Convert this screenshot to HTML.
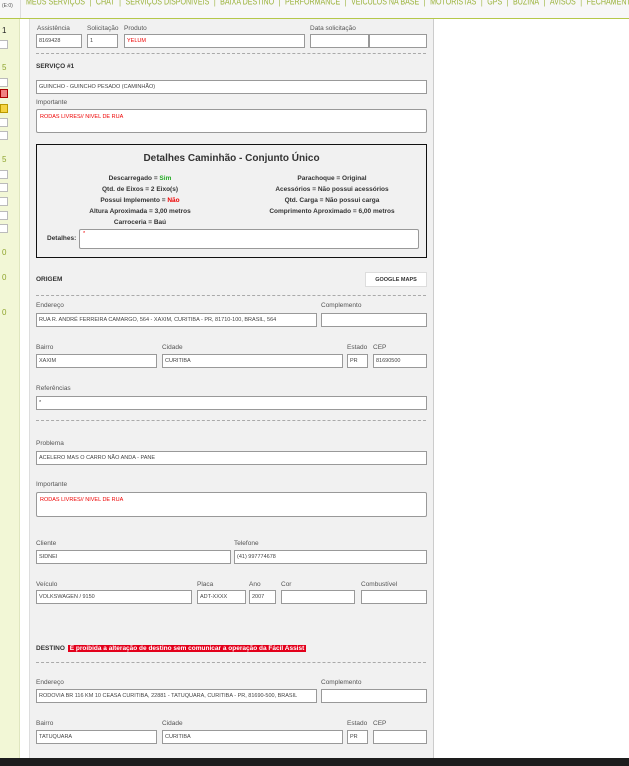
<!DOCTYPE html>
<html><head><meta charset="utf-8"><style>
*{margin:0;padding:0;box-sizing:border-box}
body{width:629px;height:766px;overflow:hidden;background:#fff;font-family:"Liberation Sans",sans-serif;position:relative}
.a{position:absolute}
.nav{left:0;top:0;width:629px;height:19px;background:#f7f7f7;border-bottom:1px solid #b5c84a;color:#9ab23a;white-space:nowrap;overflow:hidden}
.nav b{font-weight:normal;margin:0 4.5px}
.side{left:0;top:19px;width:20px;height:739px;background:#f2f7d6;border-right:1px solid #dfe6bf}
.panel{left:29px;top:19px;width:405px;height:739px;background:#f1f1f1;border-left:1px solid #ddd;border-right:1px solid #ccc}
.l{font-size:6.5px;color:#555}
.i{background:#fff;border:1px solid #999;font-size:5.5px;color:#444;padding:3px 2px 0;height:14px;white-space:nowrap;overflow:hidden}
.t{background:#fff;border:1px solid #999;border-radius:2px;font-size:5.5px;color:#e00;padding:4px 3px}
.d{border-top:1px dashed #aaa;height:0;left:36px;width:390px}
.h{font-size:6.5px;font-weight:bold;color:#333}
.box{left:36px;top:144px;width:391px;height:114px;border:1.5px solid #111}
.r{font-size:6.5px;font-weight:bold;color:#333;text-align:center;width:180px}
.bar{left:0;top:758px;width:629px;height:8px;background:#1d1d1d}
.sb{font-size:8px;color:#8fa52e;left:2px}
.sq{left:0;width:8px;height:9px;background:#fff;border:1px solid #bbb;border-left:0}
</style></head><body>
<div class="a nav"><span style="position:absolute;left:2px;top:3px;font-size:5px;color:#555">(E:0)</span><div class="a" style="left:20px;top:0;width:1px;height:18px;background:#ddd"></div><span style="position:absolute;left:26px;top:-3px;font-size:7.1px;line-height:9px;transform:scaleY(1.25);transform-origin:top left">MEUS SERVIÇOS<b>|</b>CHAT<b>|</b>SERVIÇOS DISPONÍVEIS<b>|</b>BAIXA DESTINO<b>|</b>PERFORMANCE<b>|</b>VEÍCULOS NA BASE<b>|</b>MOTORISTAS<b>|</b>GPS<b>|</b>BUZINA<b>|</b>AVISOS<b>|</b>FECHAMENTO</span></div>
<div class="a side"></div>
<div class="a sb" style="top:26px;color:#222">1</div>
<div class="a sq" style="top:40px"></div>
<div class="a sb" style="top:63px">5</div>
<div class="a sq" style="top:78px"></div>
<div class="a sq" style="top:89px;background:#f08080;border:1px solid #a00"></div>
<div class="a sq" style="top:104px;background:#f5d442;border:1px solid #b90"></div>
<div class="a sq" style="top:118px"></div>
<div class="a sq" style="top:131px"></div>
<div class="a sb" style="top:155px">5</div>
<div class="a sq" style="top:170px"></div>
<div class="a sq" style="top:183px"></div>
<div class="a sq" style="top:197px"></div>
<div class="a sq" style="top:211px"></div>
<div class="a sq" style="top:224px"></div>
<div class="a sb" style="top:248px">0</div>
<div class="a sb" style="top:273px">0</div>
<div class="a sb" style="top:308px">0</div>
<div class="a panel"></div>

<div class="a l" style="left:37px;top:25px">Assistência</div>
<div class="a l" style="left:87px;top:25px">Solicitação</div>
<div class="a l" style="left:124px;top:25px">Produto</div>
<div class="a l" style="left:310px;top:25px">Data solicitação</div>
<div class="a i" style="left:36px;top:34px;width:46px">8169428</div>
<div class="a i" style="left:87px;top:34px;width:31px">1</div>
<div class="a i" style="left:124px;top:34px;width:181px;color:#e00">YELUM</div>
<div class="a i" style="left:310px;top:34px;width:59px"></div>
<div class="a i" style="left:369px;top:34px;width:58px"></div>
<div class="a d" style="top:53px"></div>
<div class="a h" style="left:36px;top:63px">SERVIÇO #1</div>
<div class="a i" style="left:36px;top:80px;width:391px">GUINCHO - GUINCHO PESADO (CAMINHÃO)</div>
<div class="a l" style="left:36px;top:99px">Importante</div>
<div class="a t" style="left:36px;top:109px;width:391px;height:24px">RODAS LIVRES// NIVEL DE RUA</div>

<div class="a box"></div>
<div class="a" style="left:36px;top:153px;width:391px;text-align:center;font-size:10px;font-weight:bold;color:#333">Detalhes Caminhão - Conjunto Único</div>
<div class="a r" style="left:50px;top:175px">Descarregado = <span style="color:#2a2">Sim</span></div>
<div class="a r" style="left:50px;top:186px">Qtd. de Eixos = 2 Eixo(s)</div>
<div class="a r" style="left:50px;top:197px">Possui Implemento = <span style="color:#e00">Não</span></div>
<div class="a r" style="left:50px;top:208px">Altura Aproximada = 3,00 metros</div>
<div class="a r" style="left:50px;top:219px">Carroceria = Baú</div>
<div class="a r" style="left:242px;top:175px">Parachoque = Original</div>
<div class="a r" style="left:242px;top:186px">Acessórios = Não possui acessórios</div>
<div class="a r" style="left:242px;top:197px">Qtd. Carga = Não possui carga</div>
<div class="a r" style="left:242px;top:208px">Comprimento Aproximado = 6,00 metros</div>
<div class="a h" style="left:47px;top:235px">Detalhes:</div>
<div class="a t" style="left:79px;top:229px;width:340px;height:20px;padding:1px 3px">*</div>

<div class="a h" style="left:36px;top:276px">ORIGEM</div>
<div class="a" style="left:365px;top:272px;width:62px;height:15px;background:#fff;border:1px solid #ddd;font-size:5.5px;font-weight:bold;color:#333;text-align:center;line-height:14px">GOOGLE MAPS</div>
<div class="a d" style="top:295px"></div>
<div class="a l" style="left:36px;top:302px">Endereço</div>
<div class="a l" style="left:321px;top:302px">Complemento</div>
<div class="a i" style="left:36px;top:313px;width:281px">RUA R. ANDRÉ FERREIRA CAMARGO, 564 - XAXIM, CURITIBA - PR, 81710-100, BRASIL, 564</div>
<div class="a i" style="left:321px;top:313px;width:106px"></div>
<div class="a l" style="left:36px;top:344px">Bairro</div>
<div class="a l" style="left:162px;top:344px">Cidade</div>
<div class="a l" style="left:347px;top:344px">Estado</div>
<div class="a l" style="left:373px;top:344px">CEP</div>
<div class="a i" style="left:36px;top:354px;width:121px">XAXIM</div>
<div class="a i" style="left:162px;top:354px;width:181px">CURITIBA</div>
<div class="a i" style="left:347px;top:354px;width:21px">PR</div>
<div class="a i" style="left:373px;top:354px;width:54px">81690500</div>
<div class="a l" style="left:36px;top:385px">Referências</div>
<div class="a i" style="left:36px;top:396px;width:391px">*</div>
<div class="a d" style="top:420px"></div>
<div class="a l" style="left:36px;top:440px">Problema</div>
<div class="a i" style="left:36px;top:451px;width:391px">ACELERO MAS O CARRO NÃO ANDA - PANE</div>
<div class="a l" style="left:36px;top:481px">Importante</div>
<div class="a t" style="left:36px;top:492px;width:391px;height:25px">RODAS LIVRES// NIVEL DE RUA</div>
<div class="a l" style="left:36px;top:540px">Cliente</div>
<div class="a l" style="left:234px;top:540px">Telefone</div>
<div class="a i" style="left:36px;top:550px;width:195px">SIDNEI</div>
<div class="a i" style="left:234px;top:550px;width:193px">(41) 997774678</div>
<div class="a l" style="left:36px;top:581px">Veículo</div>
<div class="a l" style="left:197px;top:581px">Placa</div>
<div class="a l" style="left:249px;top:581px">Ano</div>
<div class="a l" style="left:281px;top:581px">Cor</div>
<div class="a l" style="left:361px;top:581px">Combustível</div>
<div class="a i" style="left:36px;top:590px;width:156px">VOLKSWAGEN / 9150</div>
<div class="a i" style="left:197px;top:590px;width:49px">ADT-XXXX</div>
<div class="a i" style="left:249px;top:590px;width:27px">2007</div>
<div class="a i" style="left:281px;top:590px;width:74px"></div>
<div class="a i" style="left:361px;top:590px;width:66px"></div>

<div class="a h" style="left:36px;top:645px">DESTINO <span style="background:#e3001b;color:#fff;padding:0 2px;margin-left:1px">É proibida a alteração de destino sem comunicar a operação da Fácil Assist</span></div>
<div class="a d" style="top:662px"></div>
<div class="a l" style="left:36px;top:679px">Endereço</div>
<div class="a l" style="left:321px;top:679px">Complemento</div>
<div class="a i" style="left:36px;top:689px;width:281px">RODOVIA BR 116 KM 10 CEASA CURITIBA, 22881 - TATUQUARA, CURITIBA - PR, 81690-500, BRASIL</div>
<div class="a i" style="left:321px;top:689px;width:106px"></div>
<div class="a l" style="left:36px;top:720px">Bairro</div>
<div class="a l" style="left:162px;top:720px">Cidade</div>
<div class="a l" style="left:347px;top:720px">Estado</div>
<div class="a l" style="left:373px;top:720px">CEP</div>
<div class="a i" style="left:36px;top:730px;width:121px">TATUQUARA</div>
<div class="a i" style="left:162px;top:730px;width:181px">CURITIBA</div>
<div class="a i" style="left:347px;top:730px;width:21px">PR</div>
<div class="a i" style="left:373px;top:730px;width:54px"></div>
<div class="a bar"></div>
</body></html>
